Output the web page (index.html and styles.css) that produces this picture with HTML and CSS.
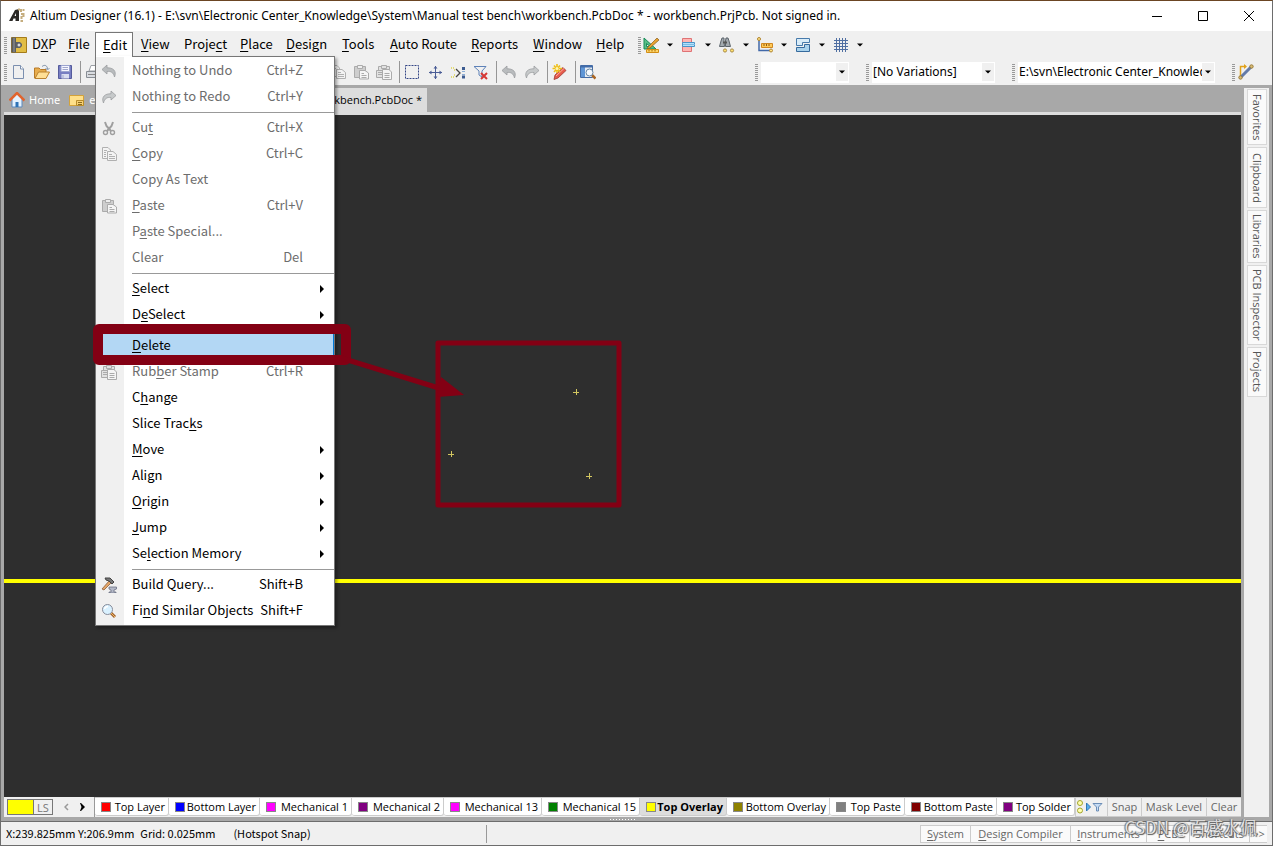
FILE: index.html
```html
<!DOCTYPE html>
<html lang="en">
<head>
<meta charset="utf-8">
<title>Altium Designer (16.1)</title>
<link rel="stylesheet" href="styles.css">
</head>
<body class="window">
<svg class="defs" aria-hidden="true">
  <defs>
    <linearGradient id="blue" x1="0" y1="0" x2="1" y2="1"><stop offset="0" stop-color="#f4faff"/><stop offset="1" stop-color="#9dbfe6"/></linearGradient>
    <symbol id="undo" viewBox="0 0 16 16"><path d="M6 2 L1 6.500 L6 11 V8.500 C10 8 12.500 9.500 13.500 14 C16 8 12 4.500 6 4.800Z" fill="#b9bcbe" stroke="#9a9da0" stroke-width=".8"/></symbol>
    <symbol id="redo" viewBox="0 0 16 16"><path d="M10 2 L15 6.500 L10 11 V8.500 C6 8 3.500 9.500 2.500 14 C0 8 4 4.500 10 4.800Z" fill="#c6c9ca" stroke="#9a9da0" stroke-width=".8"/></symbol>
    <symbol id="copy" viewBox="0 0 16 16"><g fill="#f3f3f3" stroke="#b0b0b0"><path d="M1.500 1.500H7L9.500 4V12.500H1.500Z"/><path d="M6.500 5.500H12L15.500 8.500V14.500H6.500Z"/><path d="M3 4.500H6M3 6.500H5M3 8.500H5M3 10.500H5M8 8.500H11M8 10.500H14M8 12.500H14"/></g></symbol>
    <symbol id="paste" viewBox="0 0 16 16"><g stroke="#ababab"><path d="M1.500 2.500H12.500V13.500H1.500Z" fill="#cecece"/><path d="M4.500 1.500H9.500V4.500H4.500Z" fill="#eee"/><path d="M6.500 6.500H12L15.500 9V15H6.500Z" fill="#f5f5f5"/><path d="M8.500 9.500H11M8.500 11.500H13.500M8.500 13.500H13.500"/></g></symbol>
    <symbol id="stamp" viewBox="0 0 16 16"><g stroke="#ababab" fill="#e2e2e2"><path d="M2.500 2.500H13.500V12.500H2.500Z"/><path d="M5.500 1.500H10.500V4.500H5.500Z"/><path d="M.5 6.500H6.500V13.500H.5Z"/><path d="M6.500 5.500H13L15.500 8V15.500H6.500Z" fill="#f5f5f5"/><path d="M2 8.500H6M2 10.500H6M8.500 9.500H13.500M8.500 11.500H13.500M8.500 13.500H13.500"/></g></symbol>
    <symbol id="cut" viewBox="0 0 16 16"><g fill="none" stroke="#9f9f9f"><path d="M4 2 L5.500 6 L10 11 M12 2 L10.500 6 L6 11" stroke-width="2"/><circle cx="4.500" cy="12.500" r="2" stroke-width="1.400"/><circle cx="11.500" cy="12.500" r="2" stroke-width="1.400"/></g></symbol>
    <symbol id="down" viewBox="0 0 6 4"><path d="M0 .5H6L3 3.500Z"/></symbol>
  </defs>
</svg>

<header class="titlebar">
  <svg class="icon" viewBox="0 0 16 16"><path d="M0 13 L6 2 L10 1 V13 H6.500 V10.500 H4.500 L3.500 13Z M5.500 8 H7 V5Z" fill="#292724" fill-rule="evenodd"/><path d="M12 1V4M14.500 1V3M12 6H15M12.500 8V11M14.500 5V9M11.500 13H14M9 1.500H11" stroke="#c5ad7e" stroke-width="2"/></svg>
  <h1 class="title">Altium Designer (16.1) - E:\svn\Electronic Center_Knowledge\System\Manual test bench\workbench.PcbDoc * - workbench.PrjPcb. Not signed in.</h1>
  <div class="winbuttons">
    <button type="button" aria-label="Minimize"><svg viewBox="0 0 12 12"><path d="M1 6.500H11"/></svg></button>
    <button type="button" aria-label="Maximize"><svg viewBox="0 0 12 12"><path d="M1.500 1.500H10.500V10.500H1.500Z"/></svg></button>
    <button type="button" aria-label="Close"><svg viewBox="0 0 12 12"><path d="M1 1L11 11M11 1L1 11"/></svg></button>
  </div>
</header>

<div class="menurow">
  <span class="grip"></span>
  <svg class="icon dxp" viewBox="0 0 16 16"><path d="M.5 .5H15.500V15.500H.5Z" fill="#e1bd45" stroke="#a47b19"/><path d="M.5 .5H5V15.500H.5Z" fill="#5a5d60"/><path d="M5 5H9L11 7V9L9 11H5Z" fill="#5e6163"/><circle cx="8" cy="8" r="1.500" fill="#ddd"/><path d="M3 1V15" stroke="#999"/></svg>
  <nav class="menubar" aria-label="Main menu">
    <button type="button">D<u>X</u>P</button>
    <button type="button"><u>F</u>ile</button>
    <button type="button" class="open" aria-expanded="true"><u>E</u>dit</button>
    <button type="button"><u>V</u>iew</button>
    <button type="button">Proje<u>c</u>t</button>
    <button type="button"><u>P</u>lace</button>
    <button type="button"><u>D</u>esign</button>
    <button type="button"><u>T</u>ools</button>
    <button type="button"><u>A</u>uto Route</button>
    <button type="button"><u>R</u>eports</button>
    <button type="button"><u>W</u>indow</button>
    <button type="button"><u>H</u>elp</button>
  </nav>
  <span class="grip"></span>
  <div class="utilities">
    <button type="button" aria-label="Utilities"><svg class="icon" viewBox="0 0 16 16"><path d="M1 1V12H13Z M3.500 6.500V9.500H7Z" fill="#58bd87" stroke="#168c57" fill-rule="evenodd"/><path d="M5 10L14 1L16 3L7 11L4 12Z" fill="#e9a22e" stroke="#845c20" stroke-width=".7"/><path d="M3.500 12.500H15.500V15.500H3.500Z" fill="#ffd567" stroke="#d28e16"/><path d="M6 13V14.500M9 13V14.500M12 13V14.500" stroke="#a86b00"/></svg><svg class="down"><use href="#down"/></svg></button>
    <button type="button" aria-label="Alignment tools"><svg class="icon" viewBox="0 0 16 16"><path d="M1.500 1.500H10.500V14.500H1.500Z" fill="#ffb5b3" stroke="#df7375"/><path d="M1.500 5.500H13.500V9.500H1.500Z" fill="#b4e2fb" stroke="#4a94c9"/><path d="M2 7.500H14" stroke="#7dbce4"/></svg><svg class="down"><use href="#down"/></svg></button>
    <button type="button" aria-label="Find selections"><svg class="icon" viewBox="0 0 16 16"><path d="M3 1H5V4L5.500 9.500H.5L2 4ZM7 1H9L10 4L11.500 9.500H6.500V4Z" fill="#a3aab0" stroke="#5d656c"/><path d="M4 5.500H8" stroke="#555" stroke-width="2"/><g fill="#ffe16c" stroke="#a98b49"><circle cx="6" cy="13.500" r="1.600"/><circle cx="13" cy="13.500" r="1.600"/></g></svg><svg class="down"><use href="#down"/></svg></button>
    <button type="button" aria-label="Dimensions"><svg class="icon" viewBox="0 0 16 16"><path d="M2 3V13.500H13" fill="none" stroke="#4168a8" stroke-width="1.500"/><path d="M4.500 6.500H15.500V10.500H4.500Z" fill="#ffc956" stroke="#cf8720"/><path d="M7 7V9M9.500 7V9M12 7V9" stroke="#935911"/><g fill="#ffe58a" stroke="#b18530"><circle cx="2" cy="2" r="1.500"/><circle cx="14" cy="13.500" r="1.500"/></g></svg><svg class="down"><use href="#down"/></svg></button>
    <button type="button" aria-label="Rooms"><svg class="icon" viewBox="0 0 16 16"><path d="M1.500 1.500H14.500V5.500H7.500V8.500H1.500Z" fill="#d9ecf8" stroke="#477aab"/><path d="M14.500 7.500V14.500H1.500V10.500H9.500V7.500Z" fill="#a9d2ec" stroke="#366a9d"/></svg><svg class="down"><use href="#down"/></svg></button>
    <button type="button" aria-label="Grids"><svg class="icon" viewBox="0 0 16 16"><path d="M1 3.500H15M1 6.500H15M1 9.500H15M1 12.500H15M3.500 1V15M6.500 1V15M9.500 1V15M12.500 1V15" stroke="#506fa2"/></svg><svg class="down"><use href="#down"/></svg></button>
  </div>
</div>

<div class="toolrow">
  <span class="grip"></span>
  <div class="tools">
    <button type="button" aria-label="New"><svg class="icon" viewBox="0 0 16 16"><path d="M2.500 1.500H9.500L12.500 5V14.500H2.500Z" fill="url(#blue)" stroke="#7b8faf"/><path d="M9.500 1.500V5H12.500" fill="#fff" stroke="#7b8faf"/></svg></button>
    <button type="button" aria-label="Open"><svg class="icon" viewBox="0 0 16 16"><path d="M.5 14V4H5L6.500 5.500H12V14Z" fill="#e8ad4d" stroke="#b77a28"/><path d="M1 14.500L4.500 8H15.500L12 14.500Z" fill="#ffdf95" stroke="#bb8230"/><path d="M8 2.500C11 0 13.500 2 13.500 5M11.500 4L13.500 6L15.500 4" fill="none" stroke="#8597ad"/></svg></button>
    <button type="button" aria-label="Save"><svg class="icon" viewBox="0 0 16 16"><path d="M1.500 1.500H14.500V14.500H1.500Z" fill="#777ec2" stroke="#555b9c"/><path d="M4 1.500H12.500V7.500H4Z" fill="#f6f6ff" stroke="#9aa3cf"/><path d="M4.500 10H12V14.500H4.500Z" fill="#d9ddf0"/><path d="M5.500 3.500H11M5.500 5.500H11M6 11V14" stroke="#a0a7cc"/></svg></button>
    <i class="sep"></i>
    <button type="button" aria-label="Print"><svg class="icon" viewBox="0 0 16 16"><path d="M4 7L6 1.500H13L12 7Z" fill="#fff" stroke="#9b9fa5"/><path d="M1.500 7.500H14.500V13.500H1.500Z" fill="#d9dce1" stroke="#888e95"/><path d="M3 10.500H13" stroke="#888"/></svg></button>
    <span class="undermenu"></span>
    <button type="button" aria-label="Copy"><svg class="icon"><use href="#copy"/></svg></button>
    <button type="button" aria-label="Paste"><svg class="icon"><use href="#paste"/></svg></button>
    <button type="button" aria-label="Rubber stamp"><svg class="icon"><use href="#stamp"/></svg></button>
    <i class="sep"></i>
    <button type="button" aria-label="Select area"><svg class="icon" viewBox="0 0 16 16"><path d="M1.500 1.500H14.500V14.500H1.500Z" fill="none" stroke="#344687" stroke-dasharray="2 1"/></svg></button>
    <button type="button" aria-label="Move"><svg class="icon" viewBox="0 0 16 16"><path d="M2 8.500H15M8.500 2V15" stroke="#4a5d96"/><path d="M8.500 2L6.500 4.500H10.500ZM8.500 15L6.500 12.500H10.500ZM2 8.500L4.500 6.500V10.500ZM15 8.500L12.500 6.500V10.500Z" fill="#4a5d96"/></svg></button>
    <button type="button" aria-label="Deselect"><svg class="icon" viewBox="0 0 16 16"><path d="M6 5L10 9L6 13" fill="none" stroke="#444" stroke-width="1.300"/><path d="M1 4H4M1 13H4M4 6H6M4 11H6" stroke="#e3da75" stroke-width="2" stroke-dasharray="1 1"/><path d="M12 4.500H15M12 13H15" stroke="#3d5c91" stroke-width="3"/><path d="M12 7.500H15M12 10.500H15" stroke="#8caed6"/></svg></button>
    <button type="button" aria-label="Clear filter"><svg class="icon" viewBox="0 0 16 16"><path d="M1 2.500H13L9 7V13L6 11V7Z" fill="url(#blue)" stroke="#5e82b8"/><path d="M8 9L14 15M14 9L8 15" stroke="#d63835" stroke-width="2"/></svg></button>
    <i class="sep"></i>
    <button type="button" aria-label="Undo"><svg class="icon"><use href="#undo"/></svg></button>
    <button type="button" aria-label="Redo"><svg class="icon"><use href="#redo"/></svg></button>
    <i class="sep"></i>
    <button type="button" aria-label="Cross probe"><svg class="icon" viewBox="0 0 16 16"><path d="M2 15.500L3 11L11 3.500L14 6.500L6 14Z" fill="#e75b4c" stroke="#9d3831" stroke-width=".8"/><path d="M4 12L12 4.500" stroke="#ffaaa0"/><path d="M5 0V9M.5 4.500H10M2 1.500L8 8M8 1.500L2 8" stroke="#eebf18" stroke-width="1.600"/><circle cx="5" cy="4.500" r="1.500" fill="#fff7b0"/></svg></button>
    <i class="sep"></i>
    <button type="button" aria-label="Browse"><svg class="icon" viewBox="0 0 16 16"><path d="M.5 1.500H12.500V13.500H.5Z" fill="#e8edf4" stroke="#446ba4"/><path d="M1 2H5V13H1Z" fill="#5f96d6"/><path d="M1 2.500H12" stroke="#426ca9" stroke-width="2"/><path d="M12 11L15.500 14.500" stroke="#aa6623" stroke-width="2.500"/><circle cx="9.500" cy="8.500" r="3.500" fill="#f7fbff" stroke="#6886a2"/></svg></button>
  </div>
  <span class="grip filtergrip"></span>
  <span class="combo filter"><select aria-label="Filter"><option></option></select><svg class="down"><use href="#down"/></svg></span>
  <span class="grip"></span>
  <span class="combo variant"><select aria-label="Variant"><option>[No Variations]</option></select><svg class="down"><use href="#down"/></svg></span>
  <span class="grip"></span>
  <span class="combo path"><select aria-label="Document path"><option>E:\svn\Electronic Center_Knowledge</option></select><svg class="down"><use href="#down"/></svg></span>
  <span class="grip"></span>
  <button type="button" class="route" aria-label="Route"><svg class="icon" viewBox="0 0 16 16"><path d="M2.500 12V2.500H8" fill="none" stroke="#e2a21a" stroke-width="1.500"/><path d="M6 0L9 2.500L6 5Z" fill="#e2a21a"/><path d="M3 13L13 3" stroke="#647ba9" stroke-width="3"/><g fill="#d9bd78" stroke="#9b7c37"><circle cx="2.500" cy="13.500" r="1.700"/><circle cx="13.500" cy="2.500" r="1.700"/></g></svg></button>
</div>

<div class="workspace">
  <main class="document">
    <div class="doctabs">
      <a class="doctab" href="#home"><svg class="icon" viewBox="0 0 16 16"><path d="M3 7V15H13V7L8 2Z" fill="#e4f2ff" stroke="#5c89bd"/><path d="M.5 8.500L8 1L15.500 8.500" fill="none" stroke="#e1642e" stroke-width="2.500"/><path d="M6.500 10H9.500V15H6.500Z" fill="#2d73b7"/></svg>Home</a>
      <a class="doctab second" href="#project"><svg class="icon" viewBox="0 0 16 16"><path d="M.5 3.500H14.500V13.500H.5Z" fill="#ffe08a" stroke="#d3a23a"/><path d="M7.500 8.500H14.500V13.500H7.500Z" fill="#f7d173" stroke="#b98d2c"/><path d="M9 10.500H13M9 12.500H13" stroke="#8a6a20"/></svg>electronic</a>
      <a class="doctab active" href="#pcb">workbench.PcbDoc *</a>
    </div>
    <svg class="canvas" role="img" aria-label="PCB layout">
      <path d="M569 277.500H575M572.500 274V280M444 339.500H450M447.500 336V342M582 361.500H588M585.500 358V364" stroke="#d2c660"/>
      <rect x="0" y="464" width="100%" height="4" fill="#ff0"/>
    </svg>
    <div class="layerbar">
      <button type="button" class="ls"><i></i><span>LS</span></button>
      <div class="scroll">
        <button type="button" aria-label="Previous layer"><svg viewBox="0 0 5 8"><path d="M4 1L1 4L4 7" fill="none" stroke="#999" stroke-width="1.500"/></svg></button>
        <button type="button" aria-label="Next layer"><svg viewBox="0 0 5 8"><path d="M0 0H1L5 4L1 8H0L1.500 4Z"/></svg></button>
      </div>
      <div class="layers">
        <button type="button"><i class="red"></i>Top Layer</button>
        <button type="button"><i class="bluefill"></i>Bottom Layer</button>
        <button type="button"><i class="magenta"></i>Mechanical 1</button>
        <button type="button"><i class="purple"></i>Mechanical 2</button>
        <button type="button"><i class="magenta"></i>Mechanical 13</button>
        <button type="button"><i class="green"></i>Mechanical 15</button>
        <button type="button" class="current"><i class="yellow"></i>Top Overlay</button>
        <button type="button"><i class="olive"></i>Bottom Overlay</button>
        <button type="button"><i class="gray"></i>Top Paste</button>
        <button type="button"><i class="maroon"></i>Bottom Paste</button>
        <button type="button"><i class="purple"></i>Top Solder</button>
      </div>
      <div class="maskbuttons">
        <button type="button" aria-label="Layer filter"><svg viewBox="0 0 28 16"><g fill="#ffffb0" stroke="#a4a52c"><circle cx="4" cy="4" r="2.500"/><circle cx="4" cy="11.500" r="2.500"/></g><path d="M10.500 4L14.500 8L10.500 12Z" fill="#58aeed" stroke="#3078b6"/><path d="M17 4.500H26L22.500 8V12H20.500V8Z" fill="#c6dcf4" stroke="#6c8eb7"/></svg></button>
        <button type="button">Snap</button>
        <button type="button">Mask Level</button>
        <button type="button">Clear</button>
      </div>
    </div>
    <div class="splitter"><i></i></div>
  </main>
  <aside class="sidepanel">
    <button type="button">Favorites</button>
    <button type="button">Clipboard</button>
    <button type="button">Libraries</button>
    <button type="button">PCB Inspector</button>
    <button type="button">Projects</button>
  </aside>
</div>

<footer class="status">
  <div class="readout"><span>X:239.825mm Y:206.9mm</span><span>Grid: 0.025mm</span><span>(Hotspot Snap)</span></div>
  <div class="panels">
    <button type="button"><u>S</u>ystem</button>
    <button type="button"><u>D</u>esign Compiler</button>
    <button type="button"><u>I</u>nstruments</button>
    <button type="button"><u>P</u>CB</button>
    <button type="button">Shortcuts</button>
    <button type="button">&gt;&gt;</button>
  </div>
  <span class="watermark">CSDN @百感水佩</span>
</footer>

<div class="editmenu" role="menu" aria-label="Edit">
  <button type="button" role="menuitem" class="off"><svg class="icon"><use href="#undo"/></svg><span>Nothing to Undo</span><kbd>Ctrl+Z</kbd></button>
  <button type="button" role="menuitem" class="off"><svg class="icon"><use href="#redo"/></svg><span>Nothing to Redo</span><kbd>Ctrl+Y</kbd></button>
  <hr>
  <button type="button" role="menuitem" class="off"><svg class="icon"><use href="#cut"/></svg><span>Cu<u>t</u></span><kbd>Ctrl+X</kbd></button>
  <button type="button" role="menuitem" class="off"><svg class="icon"><use href="#copy"/></svg><span><u>C</u>opy</span><kbd>Ctrl+C</kbd></button>
  <button type="button" role="menuitem" class="off"><span>Copy As Text</span></button>
  <button type="button" role="menuitem" class="off"><svg class="icon"><use href="#paste"/></svg><span><u>P</u>aste</span><kbd>Ctrl+V</kbd></button>
  <button type="button" role="menuitem" class="off"><span>P<u>a</u>ste Special...</span></button>
  <button type="button" role="menuitem" class="off"><span>Clear</span><kbd>Del</kbd></button>
  <hr>
  <button type="button" role="menuitem" class="sub"><span><u>S</u>elect</span></button>
  <button type="button" role="menuitem" class="sub"><span>D<u>e</u>Select</span></button>
  <hr>
  <button type="button" role="menuitem" class="hot"><span><u>D</u>elete</span></button>
  <button type="button" role="menuitem" class="off"><svg class="icon"><use href="#stamp"/></svg><span>Rub<u>b</u>er Stamp</span><kbd>Ctrl+R</kbd></button>
  <button type="button" role="menuitem"><span>C<u>h</u>ange</span></button>
  <button type="button" role="menuitem"><span>Slice Trac<u>k</u>s</span></button>
  <button type="button" role="menuitem" class="sub"><span><u>M</u>ove</span></button>
  <button type="button" role="menuitem" class="sub"><span>Ali<u>g</u>n</span></button>
  <button type="button" role="menuitem" class="sub"><span><u>O</u>rigin</span></button>
  <button type="button" role="menuitem" class="sub"><span><u>J</u>ump</span></button>
  <button type="button" role="menuitem" class="sub"><span>Se<u>l</u>ection Memory</span></button>
  <hr>
  <button type="button" role="menuitem"><svg class="icon" viewBox="0 0 16 16"><path d="M1 12L8 4L10 6L3 13Z" fill="#e3a568" stroke="#80522e" stroke-width=".7"/><path d="M4 1H9L13 5L11 7L8 4L5 3Z" fill="#777" stroke="#444"/><path d="M8 10H15.500V12L13 13V15H15V16H8V15H10V13L8 12Z" fill="#b4b9c8" stroke="#606478" stroke-width=".7"/></svg><span>Build Query...</span><kbd>Shift+B</kbd></button>
  <button type="button" role="menuitem"><svg class="icon" viewBox="0 0 16 16"><path d="M10 10L14 14" stroke="#a2622d" stroke-width="3"/><path d="M10 10L14 14" stroke="#efbb65"/><circle cx="6.500" cy="6.500" r="5" fill="#d9f1ff" stroke="#868b99"/><path d="M3.500 6C4 4 5.500 3.500 7 3.500" stroke="#fff" stroke-width="1.500" fill="none"/></svg><span>Fi<u>n</u>d Similar Objects</span><kbd>Shift+F</kbd></button>
</div>

<svg class="annotation" viewBox="0 0 540 190" aria-hidden="true">
  <g fill="none" stroke="#830014">
    <rect x="9" y="9" width="248" height="31" rx="1" stroke-width="10" stroke-linejoin="round"/>
    <rect x="349" y="23" width="181" height="162" stroke-width="5" stroke-linejoin="round"/>
    <path d="M249 37L353 69" stroke-width="5"/>
  </g>
  <path d="M352 57L375 75L348 77Z" fill="#830014"/>
</svg>
</body>
</html>
```
FILE: styles.css
```css
* { box-sizing: border-box; }

.window {
  --ui: "Noto Sans CJK SC", "Noto Sans", sans-serif;
  --field: "Noto Sans", sans-serif;
  --small: "Open Sans", "Noto Sans", sans-serif;
  margin: 0;
  height: 100vh;
  display: flex;
  flex-direction: column;
  position: relative;
  overflow: hidden;
  border: 1px solid #6d6d6d;
  border-top-color: #6b4523;
  background: #f0f0f0;
  color: #000;
  font: 13px/16px var(--ui);
}

button {
  margin: 0;
  padding: 0;
  border: 0;
  background: none;
  color: inherit;
  font: inherit;
  white-space: nowrap;
}

u { text-underline-offset: 2px; }
.defs { display: none; }
.icon { width: 16px; height: 16px; flex: none; display: block; }
.down { width: 6px; height: 4px; flex: none; }

.grip {
  width: 3px;
  height: 17px;
  flex: none;
  background: repeating-linear-gradient(#999 0 1px, transparent 1px 2px);
}

.titlebar {
  height: 30px;
  flex: none;
  display: flex;
  align-items: center;
  padding-left: 8px;
  gap: 5px;
  background: #fff;
}
.title { margin: 0; flex: 1; font: 12px/16px var(--field); white-space: nowrap; }
.winbuttons { display: flex; }
.winbuttons button { width: 46px; height: 30px; display: grid; place-items: center; }
.winbuttons svg { width: 12px; height: 12px; fill: none; stroke: #000; }

.menurow { height: 28px; flex: none; display: flex; align-items: center; padding-left: 3px; }
.dxp { margin: 0 1px 0 4px; }
.menubar {
  height: 26px;
  display: grid;
  grid-template-columns: 32px 35px 38px 43px 56px 46px 56px 48px 81px 62px 63px 50px;
}
.menubar button { text-align: left; padding: 0 0 2px 8px; }
.menubar button:first-child { padding-left: 4px; }
.menubar .open { background: #fff; border: 1px solid #777; border-bottom: 0; padding-left: 7px; }
.utilities { display: flex; }
.utilities button { width: 38px; height: 24px; display: flex; align-items: center; gap: 8px; padding-left: 2px; }

.toolrow { height: 26px; flex: none; display: flex; align-items: center; padding-left: 3px; }
.tools { display: flex; align-items: center; }
.tools button { width: 23px; height: 24px; display: grid; place-items: center; }
.sep { width: 5px; height: 22px; border-right: 1px solid #969696; }
.undermenu { width: 222px; }
.filtergrip { margin-left: auto; }
.combo { height: 21px; display: flex; align-items: center; background: #fff; margin: 0 17px 0 3px; padding-right: 1px; }
.combo select { appearance: none; flex: 1; min-width: 0; height: 21px; margin: 0; border: 0; padding: 0 0 0 1px; background: #fff; color: #000; font: 12px/16px var(--field); overflow: hidden; }
.combo .down { box-sizing: content-box; padding: 7px 3px; background: #f0f0f0; }
.filter { width: 88px; }
.variant { width: 123px; }
.path { width: 197px; }
.route { margin: 0 18px 0 3px; }

.workspace { flex: 1; min-height: 0; display: flex; background: #a8a8a8; border-bottom: 1px solid #6d6d6d; }
.document { flex: 1; min-width: 0; display: flex; flex-direction: column; padding: 3px 3px 0; }
.doctabs { height: 27px; flex: none; display: flex; border-bottom: 3px solid #ddd; color: #fff; font: 11px/24px var(--field); }
.doctab { display: flex; align-items: center; gap: 4px; padding-left: 5px; color: inherit; text-decoration: none; white-space: nowrap; }
.second { margin-left: 4px; }
.doctab.active { width: 120px; margin-left: auto; margin-right: calc(100% - 423px); justify-content: flex-end; padding-right: 5px; background: #ddd; color: #000; font-family: var(--small); }
.canvas { flex: 1; min-height: 0; width: 100%; display: block; background: #2e2e2e; }

.layerbar { height: 20px; flex: none; display: flex; background: #f0f0f0; font: 11px/18px var(--small); }
.ls { display: flex; width: 46px; height: 16px; margin: 2px 5px 0 3px; border: 1px solid #777; color: #777; line-height: 16px; }
.ls i { width: 26px; background: #ff0; border-right: 1px solid #777; }
.ls span { flex: 1; }
.scroll { display: flex; width: 37px; padding-right: 3px; border-right: 1px solid #999; }
.scroll button { width: 17px; display: grid; place-items: center; }
.scroll svg { width: 5px; height: 8px; }
.layers { flex: 1; min-width: 0; overflow: hidden; display: grid; grid-template-columns: 74px 91px 92px 92px 98px 98px 87px 103px 75px 92px 78px; }
.layers button { height: 19px; display: flex; align-items: center; justify-content: space-between; padding: 0 3px 0 6px; background: #fff; border: solid #ccc; border-width: 1px 1px 1px 0; border-radius: 0 0 3px 3px; }
.layers i { width: 10px; height: 10px; border: 1px solid #888; }
.layers .current { background: #ddd; font-weight: 700; }
.red { background: #f00; }
.bluefill { background: #00f; }
.magenta { background: #f0f; }
.purple { background: #800080; }
.green { background: #008000; }
.yellow { background: #ff0; }
.olive { background: #8f8200; }
.gray { background: #808080; }
.maroon { background: #800000; }
.maskbuttons { display: grid; grid-template-columns: 32px 34px 65px 35px; color: #666; }
.maskbuttons button { border: solid #ccc; border-width: 1px 0 1px 1px; }
.maskbuttons svg { display: block; width: 28px; height: 16px; }
.splitter { height: 4px; flex: none; display: grid; place-items: center; }
.splitter i { width: 25px; height: 1px; background: repeating-linear-gradient(90deg, #fff 0 1px, transparent 1px 3px); }

.sidepanel { width: 25px; flex: none; margin: 3px 3px 4px 0; padding: 1px 2px 0 3px; background: #f0f0f0; display: grid; grid-template-rows: 56px 61px 53px 80px 50px; gap: 2px; align-content: start; color: #555; font: 11px/18px var(--small); }
.sidepanel button { writing-mode: vertical-rl; border: 1px solid #d8d8d8; background: #fafafa; }

.status { height: 23px; flex: none; display: flex; justify-content: space-between; position: relative; padding-top: 3px; font: 11px/18px var(--small); }
.readout { width: 486px; display: flex; gap: 6px; padding-left: 5px; border-right: 1px solid #999; height: 18px; font: 11px/16px var(--ui); white-space: nowrap; }
.readout span:last-child { margin-left: 12px; }
.panels { display: grid; grid-template-columns: 50px 100px 76px 43px 60px 18px; margin-right: 5px; height: 18px; color: #666; }
.panels button { border: solid #ccc; border-width: 1px 0 1px 1px; background: #fafafa; line-height: 16px; }
.watermark { position: absolute; right: 15px; bottom: 6px; font: 17px/24px "Noto Sans CJK SC", sans-serif; color: rgba(255, 255, 255, .75); text-shadow: 1px 1px 1px #555, -1px 0 1px #666; white-space: nowrap; }

.editmenu {
  position: absolute;
  left: 94px;
  top: 55px;
  width: 240px;
  padding: 1px 0;
  border: 1px solid #777;
  background: linear-gradient(90deg, #f0f0f0 0 28px, #fff 28px);
  box-shadow: 2px 2px 3px rgba(0, 0, 0, .35);
}
.editmenu::before { content: ""; position: absolute; left: 0; top: -1px; width: 36px; height: 1px; background: #fff; }
.editmenu button { width: 100%; height: 26px; display: grid; grid-template-columns: 31px 1fr auto; align-items: center; padding-left: 5px; padding-right: 31px; text-align: left; }
.editmenu span { grid-column: 2; grid-row: 1; padding-bottom: 2px; }
.editmenu kbd { grid-column: 3; grid-row: 1; padding-bottom: 2px; font: inherit; }
.editmenu hr { margin: 2px 0 2px 36px; border: 0; height: 1px; background: #999; }
.editmenu .off { color: #6d6d6d; }
.editmenu .sub { padding-right: 10px; }
.editmenu .sub::after { content: ""; grid-column: 3; grid-row: 1; border: solid transparent; border-width: 4px 0 4px 4px; border-left-color: #000; }
.editmenu .hot { background: #b3d7f4; border-right: 1px solid #0078d7; }

.annotation { position: absolute; left: 88px; top: 319px; width: 540px; height: 190px; pointer-events: none; }
```
